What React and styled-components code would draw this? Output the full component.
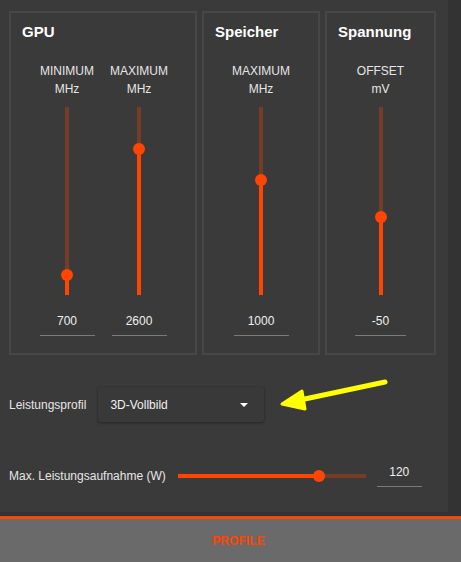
import React from 'react'
import styled, { createGlobalStyle } from 'styled-components'

const ORANGE = '#ff4500'
const TRACK = 'rgba(255, 69, 0, 0.3)'

const GlobalStyle = createGlobalStyle`
  html, body {
    margin: 0;
    padding: 0;
    background: #3a3a3a;
    font-family: "Liberation Sans", Arial, sans-serif;
  }
`

const Screen = styled.div`
  position: relative;
  width: 461px;
  height: 562px;
  display: flex;
  flex-direction: column;
  overflow: hidden;
`

const ScrollArea = styled.div`
  display: flex;
  height: 516px;
  background: #333333;
`

const Content = styled.div`
  width: 448px;
  height: 512px;
  box-sizing: border-box;
  padding: 11px 0 0 9px;
  background: #3a3a3a;
`

const PanelRow = styled.div`
  display: flex;
  gap: 5px;
`

const Panel = styled.div`
  width: ${p => p.$width}px;
  box-sizing: border-box;
  border: 2px solid #474747;
  padding: 10px 0 17px 11px;
`

const Title = styled.div`
  font-size: 15px;
  line-height: 18px;
  font-weight: bold;
  color: #ffffff;
`

const Columns = styled.div`
  display: flex;
  justify-content: center;
  gap: 17px;
  margin: 21px 0 0 -11px;
`

const Column = styled.div`
  width: ${p => p.$width || 55}px;
  display: flex;
  flex-direction: column;
  align-items: center;
`

const Label = styled.div`
  font-size: 12px;
  line-height: 18px;
  color: #e6e6e6;
  white-space: nowrap;
`

const VTrack = styled.div`
  position: relative;
  width: 4px;
  height: 188px;
  margin-top: 9px;
  background: ${TRACK};
`

const VFill = styled.div`
  position: absolute;
  left: 0;
  bottom: 0;
  width: 4px;
  background: ${ORANGE};
`

const Thumb = styled.div`
  position: absolute;
  width: 12px;
  height: 12px;
  border-radius: 50%;
  background: ${ORANGE};
`

const ValueBox = styled.div`
  width: 100%;
  margin-top: ${p => p.$top || 0}px;
  padding-bottom: 7px;
  border-bottom: 1px solid #7a7a7a;
  font-size: 12px;
  line-height: 14px;
  color: #f0f0f0;
  text-align: center;
`

const FormRow = styled.div`
  display: flex;
  align-items: center;
  margin-top: ${p => p.$top}px;
  height: ${p => p.$height}px;
`

const RowLabel = styled.div`
  font-size: 12px;
  color: #e6e6e6;
  white-space: nowrap;
`

const Select = styled.div`
  width: 166px;
  height: 35px;
  margin-left: 12px;
  box-sizing: border-box;
  padding: 0 16px 0 12px;
  display: flex;
  align-items: center;
  justify-content: space-between;
  background: #393939;
  border-radius: 2px;
  box-shadow: 0 1px 3px rgba(0, 0, 0, 0.35), 0 0 1px rgba(0, 0, 0, 0.3);
  font-size: 12px;
  color: #f2f2f2;
`

const Caret = styled.div`
  width: 0;
  height: 0;
  border-left: 4px solid transparent;
  border-right: 4px solid transparent;
  border-top: 4px solid #ffffff;
`

const HTrack = styled.div`
  position: relative;
  width: 188px;
  height: 4px;
  margin-left: 12px;
  background: ${TRACK};
`

const HFill = styled.div`
  position: absolute;
  left: 0;
  top: 0;
  height: 4px;
  background: ${ORANGE};
`

const PowerValue = styled.div`
  width: 45px;
  margin-left: 11px;
  padding-bottom: 7px;
  border-bottom: 1px solid #7a7a7a;
  font-size: 12px;
  line-height: 14px;
  color: #f0f0f0;
  text-align: center;
`

const Scrollbar = styled.div`
  width: 13px;
  height: 512px;
  background: #333333;
`

const Footer = styled.div`
  flex: 1;
  display: flex;
  align-items: center;
  justify-content: center;
  padding-left: 16px;
  background: #6a6a6a;
  border-top: 3px solid ${ORANGE};
`

const FooterTab = styled.div`
  font-size: 12px;
  font-weight: bold;
  color: ${ORANGE};
  letter-spacing: 0.1px;
`

const Pointer = styled.svg`
  position: absolute;
  left: 270px;
  top: 370px;
`

const TRACK_LEN = 188

const VerticalSlider = ({ label, unit, value, fromBottom, width }) => (
  <Column $width={width}>
    <Label>{label}</Label>
    <Label>{unit}</Label>
    <VTrack>
      <VFill style={{ height: fromBottom }} />
      <Thumb style={{ left: -4, bottom: fromBottom - 6 }} />
    </VTrack>
    <ValueBox $top={19}>{value}</ValueBox>
  </Column>
)

const panels = [
  {
    title: 'GPU',
    width: 188,
    sliders: [
      { label: 'MINIMUM', unit: 'MHz', value: '700', fromBottom: 20 },
      { label: 'MAXIMUM', unit: 'MHz', value: '2600', fromBottom: 146 },
    ],
  },
  {
    title: 'Speicher',
    width: 118,
    sliders: [{ label: 'MAXIMUM', unit: 'MHz', value: '1000', fromBottom: 115 }],
  },
  {
    title: 'Spannung',
    width: 111,
    sliders: [
      { label: 'OFFSET', unit: 'mV', value: '-50', fromBottom: 78, width: 51 },
    ],
  },
]

export default function App() {
  const power = 141
  return (
    <Screen>
      <GlobalStyle />
      <ScrollArea>
        <Content>
          <PanelRow>
            {panels.map(panel => (
              <Panel key={panel.title} $width={panel.width}>
                <Title>{panel.title}</Title>
                <Columns>
                  {panel.sliders.map(s => (
                    <VerticalSlider key={s.label} {...s} />
                  ))}
                </Columns>
              </Panel>
            ))}
          </PanelRow>

          <FormRow $top={32} $height={35}>
            <RowLabel>Leistungsprofil</RowLabel>
            <Select>
              <span>3D-Vollbild</span>
              <Caret />
            </Select>
          </FormRow>

          <FormRow $top={43} $height={22}>
            <RowLabel>Max. Leistungsaufnahme (W)</RowLabel>
            <HTrack>
              <HFill style={{ width: power }} />
              <Thumb style={{ top: -4, left: power - 6 }} />
            </HTrack>
            <PowerValue>120</PowerValue>
          </FormRow>
        </Content>
        <Scrollbar />
      </ScrollArea>
      <Footer>
        <FooterTab>PROFILE</FooterTab>
      </Footer>

      <Pointer width="130" height="50" viewBox="0 0 130 50">
        <path
          d="M115 12 L30 30"
          stroke="#ffff00"
          strokeWidth="5"
          strokeLinecap="round"
          fill="none"
        />
        <path
          d="M12 34 L32 21 L35 39 Z"
          fill="#ffff00"
          stroke="#ffff00"
          strokeWidth="3"
          strokeLinejoin="round"
        />
      </Pointer>
    </Screen>
  )
}
